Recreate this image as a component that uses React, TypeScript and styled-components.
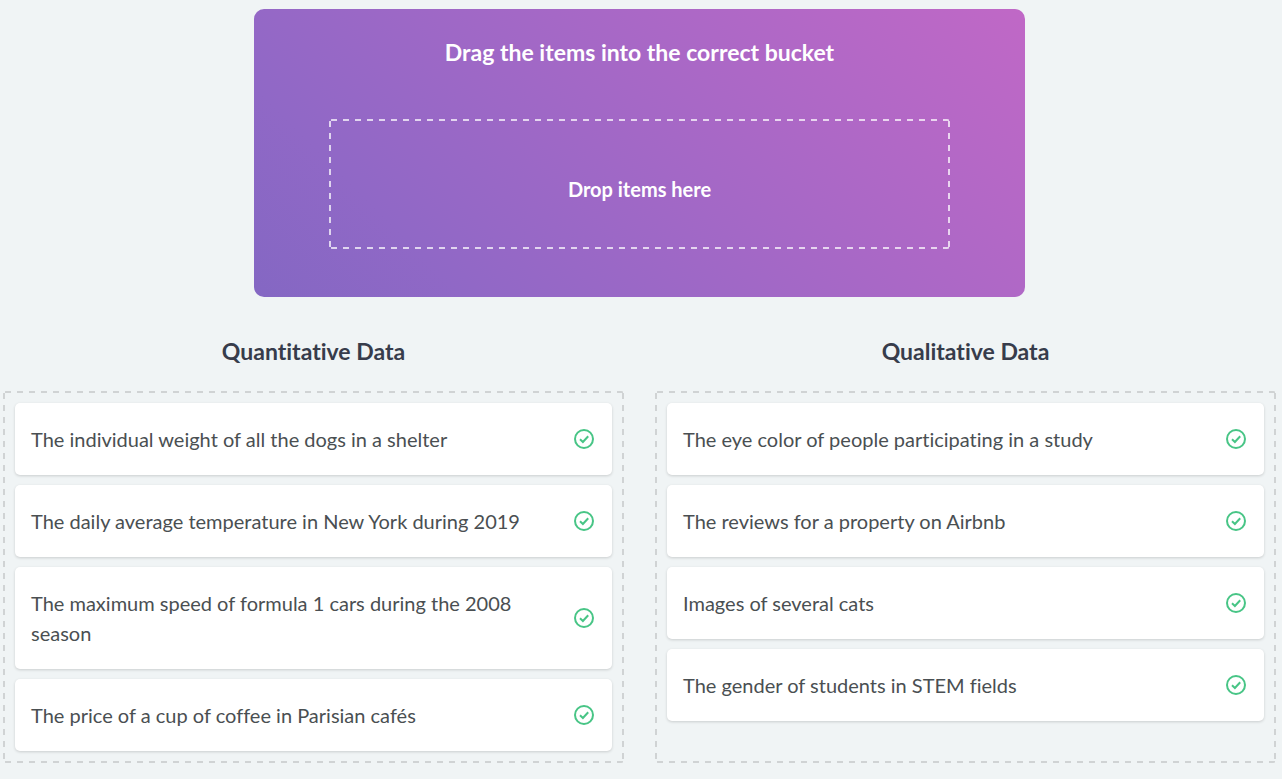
import React from "react";
import styled, { createGlobalStyle, css } from "styled-components";

const GlobalStyle = createGlobalStyle`
  *, *::before, *::after { box-sizing: border-box; }
  body {
    margin: 0;
    background: #f0f4f5;
    color: #4a4f52;
    font-family: Lato, "Liberation Sans", sans-serif;
    font-size: 20px;
    line-height: 30px;
    font-variant-ligatures: none;
  }
`;

/* Dashed outline with 6px dashes and 6px gaps on all four edges. */
const dashedFrame = (color: string) => css`
  --across: linear-gradient(90deg, transparent 2px, ${color} 2px 8px, transparent 8px);
  --down: linear-gradient(180deg, transparent 2px, ${color} 2px 8px, transparent 8px);
  border-radius: 3px;
  background:
    var(--across) left top / 12px 2px repeat-x,
    var(--across) left bottom / 12px 2px repeat-x,
    var(--down) left top / 2px 12px repeat-y,
    var(--down) right top / 2px 12px repeat-y;
`;

const Page = styled.main`
  padding: 9px 6px 16px 3px;
`;

const Hero = styled.section`
  max-width: 771px;
  margin: 0 auto;
  padding: 25px 75px 48px;
  border-radius: 10px;
  background: linear-gradient(45deg, #8467c3 0%, #9068c6 20%, #c068c6 100%);
  color: #fff;
  text-align: center;
`;

const HeroTitle = styled.h1`
  margin: 0 0 49px;
  font-size: 23px;
  line-height: 36px;
  font-weight: 700;
`;

const DropArea = styled.div`
  ${dashedFrame("rgba(255, 255, 255, 0.72)")}
  display: flex;
  align-items: center;
  justify-content: center;
  height: 130px;
  padding-top: 10px;
  font-weight: 700;
`;

const Buckets = styled.div`
  display: grid;
  grid-template-columns: repeat(2, minmax(0, 1fr));
  gap: 31px;
  margin-top: 36px;
`;

const Bucket = styled.section`
  display: flex;
  flex-direction: column;
`;

const BucketTitle = styled.h2`
  margin: 0 0 22px;
  color: #373c4b;
  font-size: 23px;
  line-height: 36px;
  font-weight: 700;
  text-align: center;
`;

const ItemList = styled.ul`
  ${dashedFrame("#d0d3d4")}
  display: flex;
  flex: 1;
  flex-direction: column;
  gap: 10px;
  margin: 0;
  padding: 12px;
  list-style: none;
`;

const Item = styled.li`
  display: flex;
  align-items: center;
  justify-content: space-between;
  gap: 48px;
  padding: 21px 16px;
  border-radius: 5px;
  background: #fff;
  box-shadow: 0 1px 3px rgba(0, 0, 0, 0.16);
`;

const CheckIcon = styled.svg`
  flex: none;
  width: 24px;
  height: 24px;
  fill: none;
  stroke: #48c586;
  stroke-width: 2;
`;

const buckets = [
  {
    title: "Quantitative Data",
    items: [
      "The individual weight of all the dogs in a shelter",
      "The daily average temperature in New York during 2019",
      "The maximum speed of formula 1 cars during the 2008 season",
      "The price of a cup of coffee in Parisian cafés",
    ],
  },
  {
    title: "Qualitative Data",
    items: [
      "The eye color of people participating in a study",
      "The reviews for a property on Airbnb",
      "Images of several cats",
      "The gender of students in STEM fields",
    ],
  },
];

export default function App() {
  return (
    <>
      <GlobalStyle />
      <Page>
        <Hero>
          <HeroTitle>Drag the items into the correct bucket</HeroTitle>
          <DropArea>Drop items here</DropArea>
        </Hero>
        <Buckets>
          {buckets.map((bucket) => (
            <Bucket key={bucket.title}>
              <BucketTitle>{bucket.title}</BucketTitle>
              <ItemList>
                {bucket.items.map((text) => (
                  <Item key={text} draggable>
                    <span>{text}</span>
                    <CheckIcon viewBox="0 0 24 24" role="img" aria-label="Correct">
                      <circle cx="12" cy="12" r="9" />
                      <path d="M8 12.2 10.9 15 16.2 9.3" />
                    </CheckIcon>
                  </Item>
                ))}
              </ItemList>
            </Bucket>
          ))}
        </Buckets>
      </Page>
    </>
  );
}
